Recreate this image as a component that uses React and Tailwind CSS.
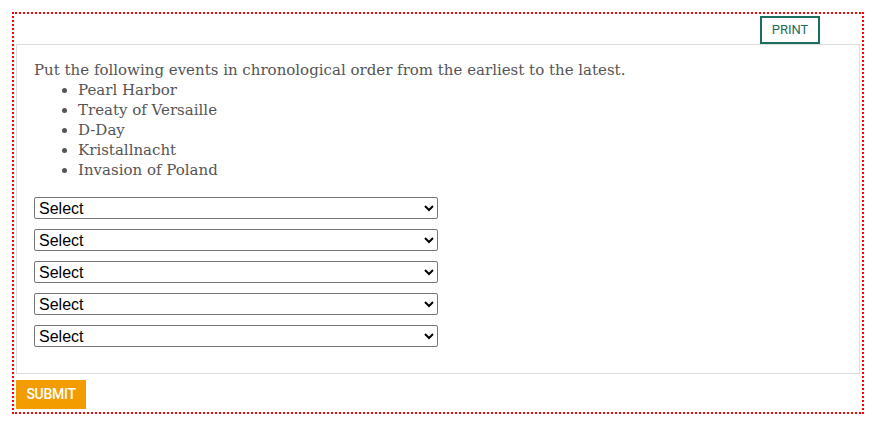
export default function App() {
  const events = [
    "Pearl Harbor",
    "Treaty of Versaille",
    "D-Day",
    "Kristallnacht",
    "Invasion of Poland",
  ];
  return (
    <div className="bg-white w-[876px] h-[426px] pt-[12px] pl-[12px]">
      <div className="w-[852px] h-[402px] border-2 border-dotted border-[#ff0000] p-[2px] flex flex-col">
        <div className="flex justify-end pr-[40px] pb-0">
          <button className="w-[60px] h-[28px] border-2 border-[#1a6f60] text-[#1a6f60] text-[13px] font-['Roboto',sans-serif]">
            PRINT
          </button>
        </div>
        <div className="border border-[#dddddd] pt-[15px] pl-[17px] pb-[26px] font-['DejaVu_Serif',serif] text-[15px] leading-[20px] text-[#555555]">
          <p>Put the following events in chronological order from the earliest to the latest.</p>
          <ul className="list-disc pl-[44px] mb-[17px]">
            {events.map((e) => (
              <li key={e}>{e}</li>
            ))}
          </ul>
          <div className="flex flex-col gap-[10px]">
            {[0, 1, 2, 3, 4].map((i) => (
              <select
                key={i}
                className="w-[404px] h-[22px] border border-[#767676] rounded-[2px] text-black text-[16px] font-['Liberation_Sans',sans-serif] appearance-auto"
              >
                <option>Select</option>
              </select>
            ))}
          </div>
        </div>
        <div className="pt-[6px]">
          <button className="w-[70px] h-[29px] bg-[#f29c00] text-white text-[14px] font-['Roboto',sans-serif] font-medium tracking-[-0.3px]">
            SUBMIT
          </button>
        </div>
      </div>
    </div>
  );
}
